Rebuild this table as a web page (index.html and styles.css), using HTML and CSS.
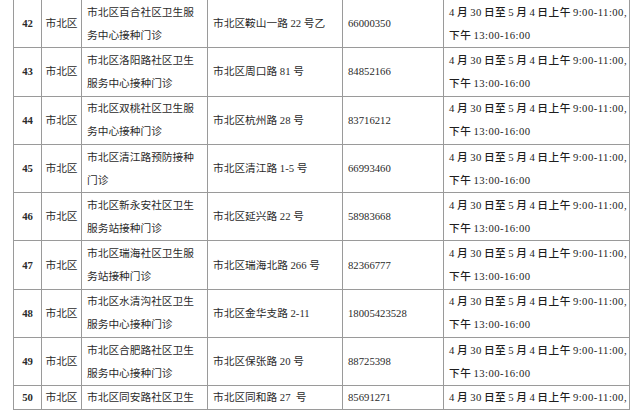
FILE: index.html
```html
<!DOCTYPE html>
<html lang="zh-CN">
<head>
<meta charset="utf-8">
<link rel="stylesheet" href="styles.css">
</head>
<body>
<table class="sites">
  <colgroup>
    <col class="c-no"><col class="c-dist"><col class="c-name"><col class="c-addr"><col class="c-tel"><col class="c-time">
  </colgroup>
  <tbody>
    <tr>
      <td class="no">42</td><td class="dist">市北区</td>
      <td class="name">市北区百合社区卫生服<br>务中心接种门诊</td>
      <td class="addr">市北区鞍山一路 22 号乙</td><td class="tel">66000350</td>
      <td class="time"><span class="ln">4 月 30 日至 5 月 4 日上午 9:00-11:00,</span><span class="ln">下午 13:00-16:00</span></td>
    </tr>
    <tr>
      <td class="no">43</td><td class="dist">市北区</td>
      <td class="name">市北区洛阳路社区卫生<br>服务中心接种门诊</td>
      <td class="addr">市北区周口路 81 号</td><td class="tel">84852166</td>
      <td class="time"><span class="ln">4 月 30 日至 5 月 4 日上午 9:00-11:00,</span><span class="ln">下午 13:00-16:00</span></td>
    </tr>
    <tr>
      <td class="no">44</td><td class="dist">市北区</td>
      <td class="name">市北区双桃社区卫生服<br>务中心接种门诊</td>
      <td class="addr">市北区杭州路 28 号</td><td class="tel">83716212</td>
      <td class="time"><span class="ln">4 月 30 日至 5 月 4 日上午 9:00-11:00,</span><span class="ln">下午 13:00-16:00</span></td>
    </tr>
    <tr>
      <td class="no">45</td><td class="dist">市北区</td>
      <td class="name">市北区清江路预防接种<br>门诊</td>
      <td class="addr">市北区清江路 1-5 号</td><td class="tel">66993460</td>
      <td class="time"><span class="ln">4 月 30 日至 5 月 4 日上午 9:00-11:00,</span><span class="ln">下午 13:00-16:00</span></td>
    </tr>
    <tr>
      <td class="no">46</td><td class="dist">市北区</td>
      <td class="name">市北区新永安社区卫生<br>服务站接种门诊</td>
      <td class="addr">市北区延兴路 22 号</td><td class="tel">58983668</td>
      <td class="time"><span class="ln">4 月 30 日至 5 月 4 日上午 9:00-11:00,</span><span class="ln">下午 13:00-16:00</span></td>
    </tr>
    <tr>
      <td class="no">47</td><td class="dist">市北区</td>
      <td class="name">市北区瑞海社区卫生服<br>务站接种门诊</td>
      <td class="addr">市北区瑞海北路 266 号</td><td class="tel">82366777</td>
      <td class="time"><span class="ln">4 月 30 日至 5 月 4 日上午 9:00-11:00,</span><span class="ln">下午 13:00-16:00</span></td>
    </tr>
    <tr>
      <td class="no">48</td><td class="dist">市北区</td>
      <td class="name">市北区水清沟社区卫生<br>服务中心接种门诊</td>
      <td class="addr">市北区金华支路 2-11</td><td class="tel">18005423528</td>
      <td class="time"><span class="ln">4 月 30 日至 5 月 4 日上午 9:00-11:00,</span><span class="ln">下午 13:00-16:00</span></td>
    </tr>
    <tr>
      <td class="no">49</td><td class="dist">市北区</td>
      <td class="name">市北区合肥路社区卫生<br>服务中心接种门诊</td>
      <td class="addr">市北区保张路 20 号</td><td class="tel">88725398</td>
      <td class="time"><span class="ln">4 月 30 日至 5 月 4 日上午 9:00-11:00,</span><span class="ln">下午 13:00-16:00</span></td>
    </tr>
    <tr class="last">
      <td class="no">50</td><td class="dist">市北区</td>
      <td class="name">市北区同安路社区卫生</td>
      <td class="addr">市北区同和路 27&nbsp; 号</td><td class="tel">85691271</td>
      <td class="time"><span class="ln">4 月 30 日至 5 月 4 日上午 9:00-11:00,</span></td>
    </tr>
  </tbody>
</table>
</body>
</html>
```
FILE: styles.css
```css
html, body {
  margin: 0;
  padding: 0;
  background: #fff;
  overflow: hidden;
}
body {
  width: 640px;
  height: 410px;
  font-family: "Liberation Serif", "Noto Sans CJK SC", serif;
  font-size: 10.7px;
  color: #2a2a2a;
}
.sites {
  border-collapse: collapse;
  table-layout: fixed;
  width: 616px;
  margin: -1px 0 0 13px;
}
.sites td {
  border: 1px solid #9a9a9a;
  padding: 0 4px 0 5px;
  line-height: 23px;
  vertical-align: middle;
  height: 48.3px;
  box-sizing: border-box;
  white-space: nowrap;
}
.sites tr.last td {
  height: 23px;
}
.c-no { width: 28px; }
.c-dist { width: 40px; }
.c-name { width: 126px; }
.c-addr { width: 135px; }
.c-tel { width: 101px; }
.c-time { width: 186px; }
.sites td.no {
  text-align: center;
  padding: 0;
  font-weight: bold;
}
.sites td.dist {
  text-align: center;
  padding: 0;
}
.sites td.time {
  padding-right: 0;
}
.time .ln {
  display: block;
  letter-spacing: 0.45px;
  word-spacing: -1px;
  font-weight: 500;
  color: #1e1e1e;
}
```
